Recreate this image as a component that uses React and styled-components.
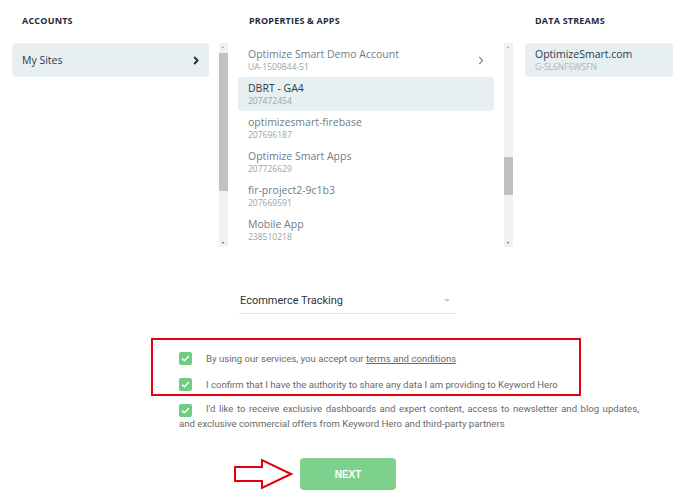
import styled, { createGlobalStyle } from 'styled-components';

const GlobalStyle = createGlobalStyle`
  body {
    margin: 0;
    background: #fff;
    font-family: "Open Sans", sans-serif;
  }
`;

const Page = styled.div`
  width: 683px;
  height: 500px;
  overflow: hidden;
`;

const Columns = styled.div`
  display: flex;
  align-items: flex-start;
  padding: 14px 0 0 12px;
`;

const Column = styled.div`
  width: ${props => props.width}px;
  margin-right: ${props => props.gap || 0}px;
  flex-shrink: 0;
`;

const Heading = styled.div`
  font-size: 9px;
  font-weight: 700;
  color: #1e2b3b;
  letter-spacing: 0.2px;
  line-height: 14px;
  padding-left: ${props => props.indent || 10}px;
  margin-bottom: 15px;
`;

const Card = styled.div`
  display: flex;
  align-items: center;
  justify-content: space-between;
  height: 34px;
  box-sizing: border-box;
  padding: 0 10px;
  border-radius: 4px;
  background: ${props => (props.active ? '#e8eff1' : 'transparent')};
`;

const CardText = styled.div`
  display: flex;
  flex-direction: column;
`;

const Title = styled.div`
  font-size: 10.5px;
  line-height: 14px;
  color: ${props => (props.dark ? '#2a3a4a' : '#6f7d86')};
`;

const Sub = styled.div`
  font-size: 8.5px;
  line-height: 12px;
  color: ${props => (props.light ? '#aab6bd' : '#98a3aa')};
`;

const ListRow = styled.div`
  display: flex;
  align-items: flex-start;
`;

const Track = styled.div`
  position: relative;
  width: 9px;
  height: 204px;
  background: #f1f1f1;
  flex-shrink: 0;
`;

const Thumb = styled.div`
  margin-top: ${props => props.top}px;
  height: ${props => props.size}px;
  background: #c1c1c1;
`;

const TrackArrow = styled.div`
  position: absolute;
  left: 3px;
  ${props => (props.down ? 'bottom: 3px;' : 'top: 3px;')}
  width: 0;
  height: 0;
  border-left: 1.5px solid transparent;
  border-right: 1.5px solid transparent;
  ${props => (props.down ? 'border-top: 2px solid #505050;' : 'border-bottom: 2px solid #a3a3a3;')}
`;

const List = styled.div`
  width: 256px;
  margin: 0 10px;
  height: 204px;
  overflow: hidden;
`;

const Select = styled.div`
  display: flex;
  align-items: center;
  justify-content: space-between;
  width: 217px;
  box-sizing: border-box;
  margin: 47px 0 0 239px;
  padding: 0 6px 6px 1px;
  border-bottom: 1px solid #e6e6e6;
  font-family: Roboto, sans-serif;
  font-size: 11px;
  color: #333;
`;

const Caret = styled.span`
  width: 0;
  height: 0;
  border-left: 3.5px solid transparent;
  border-right: 3.5px solid transparent;
  border-top: 3.5px solid #c8c8c8;
`;

const Consent = styled.div`
  margin: 24px 0 0 151px;
  font-family: Roboto, sans-serif;
  font-size: 9.6px;
  color: #6a6a6a;
`;

const Highlight = styled.div`
  width: 430px;
  box-sizing: border-box;
  border: 2px solid #e3000f;
  padding: 8px 0 0 26px;
`;

const CheckRow = styled.div`
  display: flex;
  align-items: center;
  height: 20px;
  margin-bottom: ${props => props.last ? 0 : 6}px;
`;

const WrapRow = styled.div`
  width: 460px;
  margin: 6px 0 0 28px;
  line-height: 14px;
  text-align: justify;
`;

const Box = styled.span`
  display: inline-flex;
  align-items: center;
  justify-content: center;
  vertical-align: -2px;
  width: 13px;
  height: 13px;
  border-radius: 2px;
  background: #70cd80;
  margin-right: 14px;
`;

const Terms = styled.span`
  text-decoration: underline;
`;

const Footer = styled.div`
  display: flex;
  align-items: center;
  margin: 27px 0 0 233px;
`;

const NextButton = styled.button`
  width: 96px;
  height: 32px;
  margin-left: 7px;
  border: none;
  border-radius: 4px;
  background: #7ed18c;
  color: #fff;
  font-family: "Liberation Sans", Arial, sans-serif;
  font-weight: 700;
  font-size: 10px;
`;

const Chevron = ({ bold }) => (
  <svg width="6" height="9" viewBox="0 0 6 9">
    <path
      d="M1.2 1 L4.6 4.5 L1.2 8"
      fill="none"
      stroke={bold ? '#1e2b3b' : '#7c878e'}
      strokeWidth={bold ? 1.8 : 1.1}
    />
  </svg>
);

const Check = () => (
  <svg width="9" height="7" viewBox="0 0 9 7">
    <path d="M1 3.5 L3.4 5.8 L8 1" fill="none" stroke="#fff" strokeWidth="1.4" />
  </svg>
);

const properties = [
  { name: 'Optimize Smart Demo Account', id: 'UA-1509844-51', chevron: true },
  { name: 'DBRT - GA4', id: '207472454', active: true },
  { name: 'optimizesmart-firebase', id: '207696187' },
  { name: 'Optimize Smart Apps', id: '207726629' },
  { name: 'fir-project2-9c1b3', id: '207669591' },
  { name: 'Mobile App', id: '238510218' },
];

const App = () => (
  <Page>
    <GlobalStyle />
    <Columns>
      <Column width={197} gap={10}>
        <Heading>ACCOUNTS</Heading>
        <Card active>
          <Title dark>My Sites</Title>
          <Chevron bold />
        </Card>
      </Column>
      <Column width={296} gap={10}>
        <Heading indent={30}>PROPERTIES &amp; APPS</Heading>
        <ListRow>
          <Track>
            <TrackArrow />
            <Thumb top={10} size={138} />
            <TrackArrow down />
          </Track>
          <List>
            {properties.map(p => (
              <Card key={p.id} active={p.active}>
                <CardText>
                  <Title dark={p.active}>{p.name}</Title>
                  <Sub>{p.id}</Sub>
                </CardText>
                {p.chevron && <Chevron />}
              </Card>
            ))}
          </List>
          <Track>
            <TrackArrow />
            <Thumb top={114} size={38} />
            <TrackArrow down />
          </Track>
        </ListRow>
      </Column>
      <Column width={148}>
        <Heading>DATA STREAMS</Heading>
        <Card active>
          <CardText>
            <Title dark>OptimizeSmart.com</Title>
            <Sub light>G-SL6NF6WSFN</Sub>
          </CardText>
        </Card>
      </Column>
    </Columns>

    <Select>
      <span>Ecommerce Tracking</span>
      <Caret />
    </Select>

    <Consent>
      <Highlight>
        <CheckRow>
          <Box><Check /></Box>
          <span>By using our services, you accept our <Terms>terms and conditions</Terms></span>
        </CheckRow>
        <CheckRow last>
          <Box><Check /></Box>
          <span>I confirm that I have the authority to share any data I am providing to Keyword Hero</span>
        </CheckRow>
      </Highlight>
      <WrapRow>
        <Box><Check /></Box>
        I&apos;d like to receive exclusive dashboards and expert content, access to newsletter and blog updates,
        and exclusive commercial offers from Keyword Hero and third-party partners
      </WrapRow>
    </Consent>

    <Footer>
      <svg width="60" height="32" viewBox="0 0 60 32">
        <path
          d="M2 9 H29 V2 L58 16 L29 30 V23 H2 Z"
          fill="none"
          stroke="#e3000f"
          strokeWidth="2"
        />
      </svg>
      <NextButton>NEXT</NextButton>
    </Footer>
  </Page>
);

export default App;
